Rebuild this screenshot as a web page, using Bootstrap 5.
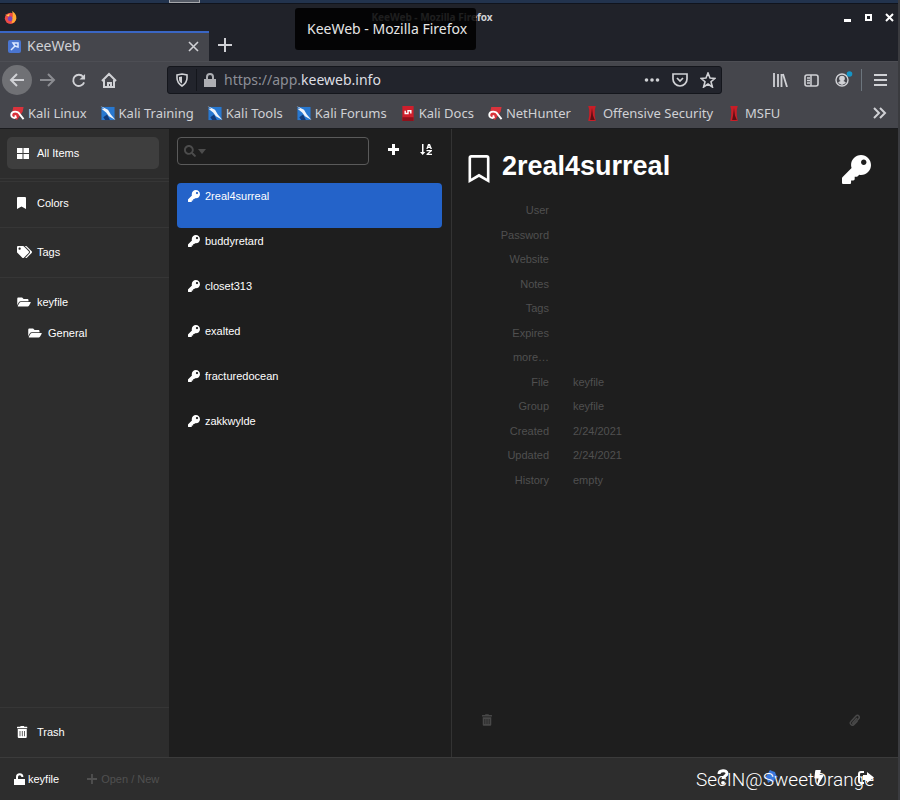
<!DOCTYPE html>
<html lang="en">
<head>
<meta charset="utf-8">
<meta name="viewport" content="width=device-width, initial-scale=1">
<title>KeeWeb</title>
<link href="https://cdn.jsdelivr.net/npm/bootstrap@5.3.0/dist/css/bootstrap.min.css" rel="stylesheet">
<style>
body{background:#1e1e1e;color:#fff;font:11px/16px "Liberation Sans",Arial,sans-serif}
.window{border-right:2px solid #3a3b3f}
.chrome{font:13px/18px "Noto Sans",sans-serif;color:#d0d1d5}
svg{fill:currentColor;flex:none;display:block}
.line-icon{fill:none;stroke:currentColor;stroke-width:2}
button,a{color:inherit;background:none;border:0;padding:0;text-decoration:none;text-align:left}
.desktop-strip{height:3px;background:#22334d;padding-left:169px}
.desktop-strip span{display:block;width:31px;height:3px;border:1px solid #a4a6aa;border-top:0;background:#555b66}
.titlebar{height:28px;background:#202229;border-top:1px solid #10141d;padding:0 4px}
.window-title{font-size:10px;font-weight:700;padding-left:4px;margin-bottom:2px}
.window-buttons{gap:12px;color:#fff}
.tip{position:absolute;left:295px;top:8px;z-index:5;background:rgba(0,0,0,.86);border-radius:3px;padding:12px 9px 12px 12px;font-size:14px;color:#e6e6e6}
.tabs{height:30px;background:#202229}
.tab{width:209px;background:#45464c;border-top:2px solid #3a66c4;padding:0 10px 2px 8px;gap:6px;font-size:14px}
.new-tab{padding:0 0 2px 9px}
.toolbar{height:37px;background:#45464c;padding:0 11px 0 2px;border-top:1px solid #4d4e54}
.nav-buttons{gap:15px}
.back{width:30px;height:30px;background:#707175;margin-right:-7px}
.address{height:28px;background:#22242c;border:1px solid #14161c;border-radius:3px;margin-left:50px;width:555px;padding:0 5px 0 7px}
.url{font-size:14px;color:#8c8e96}
.url b{font-weight:400;color:#dddee2}
.divider{width:1px;height:22px;background:#14161c;margin:0 7px}
.bookmarks{height:31px;background:#45464c;border-bottom:1px solid #1a1b1e;padding:0 11px 0 9px;gap:13px}
.bookmarks a{gap:3px;white-space:nowrap}
.side{width:169px;background:#2d2d2d}
.side-row{padding:0 17px 2px;gap:6px;height:50px}
.side-row.short{height:46px;padding-bottom:4px}
.icon-slot{width:14px}
.tight{margin-right:-1px}
.nested{height:12px;padding:0 17px 0 28px;gap:6px}
.selected-side{height:32px;margin:8px 10px 9px 7px;padding:0 10px;gap:8px;background:#3e3e3e;border-radius:5px}
.rule{border-top:1px solid #363636}
.gap-rule{height:3px}
.list{width:283px;border-right:1px solid #333;padding:8px 9px 0 8px}
.search{width:192px;height:28px;border:1px solid #5a5a5a;border-radius:4px;color:#4c4c4c;padding:0 6px;gap:2px}
.search input{min-width:0;background:none;border:0;outline:0;color:#fff}
.actions{gap:21px;margin:0 0 4px 19px}
.items{margin-top:18px}
.items button{height:45px;width:100%;padding:5px 11px;gap:5px;border-radius:4px}
.items svg{margin-top:2px}
.items .current{background:#2463c9}
.details{padding:0 27px 0 16px}
.details h1{font-size:27px;line-height:34px;font-weight:700;margin:0}
.heading{padding-top:20px;gap:12px}
.heading button{padding-top:6px}
.fields{margin:14px 0 0;display:grid;grid-template-columns:81px 1fr;grid-auto-rows:1fr;column-gap:24px;height:294px;color:#505050;align-items:center}
.fields dt{text-align:right;font-weight:400}
.fields dd{margin:0}
.detail-actions{color:#484848;padding:0 11px 31px 14px}
.bottom{height:43px;background:#2d2d2d;border-top:1px solid #3b3b3b;padding:0 24px 0 14px}
.open-file{gap:2px}
.muted-button{color:#505050}
.bottom-icons{gap:34px;margin-bottom:4px}
.watermark{position:absolute;right:24px;bottom:7px;font:300 19px/26px Roboto,sans-serif;z-index:4}
</style>
</head>
<body>
<svg width="0" height="0" class="position-absolute" aria-hidden="true"><defs>
<symbol id="key" viewBox="0 0 512 512"><path d="M512 176.001C512 273.203 433.202 352 336 352c-11.22 0-22.19-1.062-32.827-3.069l-24.012 27.014A23.999 23.999 0 0 1 261.223 384H224v40c0 13.255-10.745 24-24 24h-40v40c0 13.255-10.745 24-24 24H24c-13.255 0-24-10.745-24-24v-78.059c0-6.365 2.529-12.47 7.029-16.971l161.802-161.802C163.108 213.814 160 195.271 160 176 160 78.798 238.797.001 335.999 0 433.488-.001 512 78.511 512 176.001zM336 128c0 26.51 21.49 48 48 48s48-21.49 48-48-21.49-48-48-48-48 21.49-48 48z"/></symbol>
<symbol id="folder" viewBox="0 0 576 512"><path d="M572.694 292.093L500.27 416.248A63.997 63.997 0 0 1 444.989 448H45.025c-18.523 0-30.064-20.093-20.731-36.093l72.424-124.155A64 64 0 0 1 152 256h399.964c18.523 0 30.064 20.093 20.73 36.093zM152 224h328v-48c0-26.51-21.49-48-48-48H272l-64-64H48C21.49 64 0 85.49 0 112v278.046l69.077-118.418C86.214 242.25 117.989 224 152 224z"/></symbol>
<symbol id="trash" viewBox="0 0 448 512"><path fill-rule="evenodd" d="M32 464a48 48 0 0 0 48 48h288a48 48 0 0 0 48-48V128H32zM304 208h32v224h-32zM208 208h32v224h-32zM112 208h32v224h-32zM432 32H312l-16-32H152l-16 32H16L0 48v48h448V48z"/></symbol>
<symbol id="dragon" viewBox="0 0 16 16"><path fill="#2878d0" d="M1 1h14v14H1z"/><path fill="#123a78" d="M3 12l4-3 3 6H5z"/><path fill="#f0f4fa" d="M0 0l8 4 3 5 5 6-7-4-3-4-5-4 3 0z"/></symbol>
<symbol id="swirl" viewBox="0 0 16 16"><path fill="#d9333c" d="M4 1h11l-1 5-6 9-6-4z"/><path fill="none" stroke="#fff" stroke-width="2" d="M6 13C0 12 1 6 6 6c3 0 4 1 5 3l4 5M7 13l-1-3"/></symbol>
<symbol id="spike" viewBox="0 0 16 16"><path fill="#c81e27" d="M4 0h8l-1 4v6l1 6H4l1-6V4z"/><path fill="#5d0e13" d="M8 2l1 8 2 5H6l1-5z"/></symbol>
</defs></svg>

<div class="window vh-100 d-flex flex-column position-relative overflow-hidden">
<header class="chrome">
  <div class="desktop-strip"><span></span></div>
  <div class="titlebar d-flex align-items-center">
    <svg width="13" height="13" viewBox="0 0 16 16"><circle cx="8" cy="9" r="7" fill="#ee4b45"/><path fill="#ffac33" d="M10 0c3 2 6 5 5 10-1 3-4 5-6 5 3-4 0-5-1-6 4 0 3-4 2-9z"/><path fill="#ffd04a" d="M1 4l3 1 3-2-1 4z"/><circle cx="7.500" cy="9.500" r="3" fill="#7b45b8"/></svg>
    <span class="window-title flex-fill text-center">KeeWeb - Mozilla Firefox</span>
    <div class="window-buttons d-flex">
      <button aria-label="Minimize"><svg width="9" height="9" viewBox="0 0 9 9"><path d="M1 6h7v3H1z"/></svg></button>
      <button aria-label="Maximize"><svg width="9" height="9" viewBox="0 0 9 9" class="line-icon"><path d="M2 2h5v5H2z"/></svg></button>
      <button aria-label="Close window"><svg width="9" height="9" viewBox="0 0 9 9" class="line-icon"><path d="M1 1l7 7M8 1L1 8"/></svg></button>
    </div>
  </div>
  <div class="tip">KeeWeb - Mozilla Firefox</div>
  <div class="tabs d-flex">
    <div class="tab d-flex align-items-center">
      <svg width="13" height="13" viewBox="0 0 13 13"><rect width="13" height="13" rx="2" fill="#4a75d0"/><path stroke="#dce8ff" stroke-width="1.500" fill="none" d="M3 10l4-4M5 3h5v4L7 6z"/></svg>
      <span class="flex-fill">KeeWeb</span>
      <button aria-label="Close tab"><svg width="11" height="11" viewBox="0 0 11 11" class="line-icon"><path d="M1 1l9 9M10 1l-9 9" stroke-width="1.600"/></svg></button>
    </div>
    <button class="new-tab" aria-label="New tab"><svg width="14" height="14" viewBox="0 0 14 14" class="line-icon"><path d="M7 0v14M0 7h14"/></svg></button>
  </div>
  <nav class="toolbar d-flex align-items-center">
    <div class="nav-buttons d-flex align-items-center">
    <button class="back rounded-circle d-flex align-items-center justify-content-center" aria-label="Back"><svg width="16" height="14" viewBox="0 0 16 14" class="line-icon"><path d="M15 7H2M8 1L2 7l6 6"/></svg></button>
    <button class="opacity-50" aria-label="Forward"><svg width="16" height="14" viewBox="0 0 16 14" class="line-icon"><path d="M0 7h14M8 1l6 6-6 6"/></svg></button>
    <button aria-label="Reload"><svg width="15" height="15" viewBox="0 0 16 16" class="line-icon"><path d="M13 4a6 6 0 1 0 1 6"/><path d="M15 1v6H9z" fill="currentColor" stroke="none"/></svg></button>
    <button aria-label="Home"><svg width="16" height="16" viewBox="0 0 16 16" class="line-icon"><path d="M1 9l7-7 7 7M3 8v7h10V8M7 15v-4h3v4"/></svg></button>
    </div>
    <div class="address d-flex align-items-center">
      <svg width="14" height="14" viewBox="0 0 14 14" class="line-icon"><path stroke-width="1.600" d="M2 2l5-1 5 1v3c0 4-2 6-5 8-3-2-5-4-5-8z"/><path fill="currentColor" stroke="none" d="M7 3.500l-3 .6V6c0 2 1 3.500 3 4.500z"/></svg>
      <span class="divider"></span>
      <svg width="12" height="14" viewBox="0 0 12 14" opacity=".8"><path d="M0 6h12v8H0z"/><path class="line-icon" d="M3 7V4a3 3 0 0 1 6 0v3"/></svg>
      <span class="url flex-fill ms-2">https://app.<b>keeweb.info</b></span>
      <button aria-label="Page actions"><svg width="16" height="14" viewBox="0 0 16 14"><circle cx="2.500" cy="7" r="1.800"/><circle cx="8" cy="7" r="1.800"/><circle cx="13.500" cy="7" r="1.800"/></svg></button>
      <button class="ms-2 me-1 px-1" aria-label="Pocket"><svg width="16" height="14" viewBox="0 0 16 14" class="line-icon"><path stroke-width="1.700" d="M1 1h14v5a7 7 0 0 1-14 0zM5 5l3 3 3-3"/></svg></button>
      <button class="ms-1" aria-label="Bookmark page"><svg width="16" height="16" viewBox="0 0 16 16" class="line-icon"><path stroke-width="1.600" d="M8 1l2 5 5 .4-4 3.300L12.400 15 8 12l-4.400 3L5 9.700 1 6.400 6 6z"/></svg></button>
    </div>
    <div class="d-flex align-items-center ms-auto">
      <button aria-label="Library"><svg width="15" height="14" viewBox="0 0 15 14" class="line-icon"><path stroke-width="1.800" d="M1 0v14M5 1v13M8.500 1v13M10 1l4 13"/></svg></button>
      <button class="ms-3" aria-label="Sidebars"><svg width="15" height="13" viewBox="0 0 15 13" class="line-icon"><rect x="1" y="1" width="13" height="11" rx="2" stroke-width="1.600"/><path stroke-width="1.500" d="M7 1v11M3 4h3M3 6.500h3M3 9h3"/></svg></button>
      <button class="ms-3" aria-label="Account"><svg width="18" height="20" viewBox="0 0 18 20"><circle cx="7" cy="10" r="6" fill="none" stroke="currentColor" stroke-width="1.400"/><circle cx="7" cy="8.500" r="2.800"/><path d="M3 13c2-3 6-3 8 0l-4 2z"/><circle cx="14.500" cy="4" r="2.800" fill="#1595c6"/></svg></button>
      <span class="divider bg-secondary mx-2"></span>
      <button class="ms-1" aria-label="Menu"><svg width="13" height="12" viewBox="0 0 13 12"><path d="M0 0h13v2H0zM0 5h13v2H0zM0 10h13v2H0z"/></svg></button>
    </div>
  </nav>
  <nav class="bookmarks d-flex align-items-center">
    <a class="d-flex align-items-center" href="#"><svg width="16" height="15"><use href="#swirl"/></svg>Kali Linux</a>
    <a class="d-flex align-items-center" href="#"><svg width="16" height="15"><use href="#dragon"/></svg>Kali Training</a>
    <a class="d-flex align-items-center" href="#"><svg width="16" height="15"><use href="#dragon"/></svg>Kali Tools</a>
    <a class="d-flex align-items-center" href="#"><svg width="16" height="15"><use href="#dragon"/></svg>Kali Forums</a>
    <a class="d-flex align-items-center" href="#"><svg width="16" height="15" viewBox="0 0 16 16"><path fill="#cf1f2c" d="M2 0h12v16H2z"/><path fill="#8e111b" d="M2 12h12v4H2z"/><path fill="none" stroke="#fff" stroke-width="1.500" d="M5 5v3h3V5h3v3"/></svg>Kali Docs</a>
    <a class="d-flex align-items-center" href="#"><svg width="16" height="15"><use href="#swirl"/></svg>NetHunter</a>
    <a class="d-flex align-items-center" href="#"><svg width="16" height="15"><use href="#spike"/></svg>Offensive Security</a>
    <a class="d-flex align-items-center" href="#"><svg width="16" height="15"><use href="#spike"/></svg>MSFU</a>
    <button class="ms-auto" aria-label="More bookmarks"><svg width="14" height="12" viewBox="0 0 14 12" class="line-icon"><path d="M1 1l5 5-5 5M7 1l5 5-5 5"/></svg></button>
  </nav>
</header>

<main class="d-flex flex-fill">
  <nav class="side d-flex flex-column flex-shrink-0">
    <button class="selected-side d-flex align-items-center"><svg width="12" height="11" viewBox="0 0 12 11"><path d="M0 0h5.500v5H0zM6.500 0H12v5H6.500zM0 6h5.500v5H0zM6.500 6H12v5H6.500z"/></svg>All Items</button>
    <div class="rule gap-rule"></div>
    <button class="side-row short rule d-flex align-items-center"><svg class="icon-slot" height="12" viewBox="0 0 384 512" preserveAspectRatio="xMinYMid"><path d="M0 512V48C0 21.490 21.490 0 48 0h288c26.510 0 48 21.490 48 48v464L192 400 0 512z"/></svg>Colors</button>
    <button class="side-row rule d-flex align-items-center"><svg width="15" height="12" viewBox="0 0 640 512" class="tight"><path d="M497.941 225.941L286.059 14.059A48 48 0 0 0 252.118 0H48C21.490 0 0 21.490 0 48v204.118a48 48 0 0 0 14.059 33.941l211.882 211.882c18.744 18.745 49.136 18.746 67.882 0l204.118-204.118c18.745-18.745 18.745-49.137 0-67.882zM112 160c-26.510 0-48-21.490-48-48s21.490-48 48-48 48 21.490 48 48-21.490 48-48 48zm513.941 133.823L421.823 497.941c-18.745 18.745-49.137 18.745-67.882 0l-.36-.36L527.640 323.522c16.999-16.999 26.360-39.600 26.360-63.640s-9.362-46.641-26.360-63.640L331.397 0h48.721a48 48 0 0 1 33.941 14.059l211.882 211.882c18.745 18.745 18.745 49.137 0 67.882z"/></svg>Tags</button>
    <button class="side-row rule d-flex align-items-center"><svg class="icon-slot" height="12"><use href="#folder"/></svg>keyfile</button>
    <button class="nested d-flex align-items-center"><svg class="icon-slot" height="12"><use href="#folder"/></svg>General</button>
    <button class="side-row rule d-flex align-items-center mt-auto"><svg class="icon-slot" height="12" viewBox="0 0 448 512" preserveAspectRatio="xMinYMid"><use href="#trash" width="448" height="512"/></svg>Trash</button>
  </nav>
  <section class="list flex-shrink-0">
    <div class="d-flex align-items-center">
      <label class="search d-flex align-items-center"><svg width="12" height="12" viewBox="0 0 512 512"><path d="M505 442.700L405.300 343c-4.500-4.500-10.600-7-17-7H372c27.600-35.300 44-79.700 44-128C416 93.100 322.900 0 208 0S0 93.100 0 208s93.100 208 208 208c48.300 0 92.700-16.400 128-44v16.300c0 6.400 2.500 12.500 7 17l99.700 99.700c9.400 9.400 24.600 9.400 33.900 0l28.300-28.300c9.400-9.400 9.400-24.600.1-34zM208 336c-70.700 0-128-57.200-128-128 0-70.700 57.200-128 128-128 70.700 0 128 57.200 128 128 0 70.700-57.200 128-128 128z"/></svg><svg width="8" height="5" viewBox="0 0 8 5"><path d="M0 0h8L4 5z"/></svg><input class="flex-fill" type="text" aria-label="Search"></label>
      <div class="actions d-flex align-items-center">
        <button aria-label="Add entry"><svg width="11" height="11" viewBox="0 0 11 11"><path d="M4 0h3v4h4v3H7v4H4V7H0V4h4z"/></svg></button>
        <button aria-label="Sort"><svg width="12" height="11" viewBox="0 0 12 11"><path d="M2 0h1.500v8H5.300L2.700 11 0 8h2zM8 0h2l2 5h-1.600l-.3-1H8l-.4 1H6.300zM9 1.500L8.600 3h.8zM6.500 6H12v1L8.700 9.800H12V11H6.500v-1L9.800 7.200H6.500z"/></svg></button>
      </div>
    </div>
    <div class="items">
      <button class="current d-flex"><svg width="12" height="12"><use href="#key"/></svg><span>2real4surreal</span></button>
      <button class="d-flex"><svg width="12" height="12"><use href="#key"/></svg><span>buddyretard</span></button>
      <button class="d-flex"><svg width="12" height="12"><use href="#key"/></svg><span>closet313</span></button>
      <button class="d-flex"><svg width="12" height="12"><use href="#key"/></svg><span>exalted</span></button>
      <button class="d-flex"><svg width="12" height="12"><use href="#key"/></svg><span>fracturedocean</span></button>
      <button class="d-flex"><svg width="12" height="12"><use href="#key"/></svg><span>zakkwylde</span></button>
    </div>
  </section>
  <section class="details flex-fill d-flex flex-column">
    <div class="heading d-flex align-items-start">
      <button aria-label="Entry color"><svg width="22" height="28" viewBox="0 0 384 512"><path d="M336 0H48C21.490 0 0 21.490 0 48v464l192-112 192 112V48c0-26.510-21.490-48-48-48zm0 428.430l-144-84-144 84V54a6 6 0 0 1 6-6h276c3.314 0 6 2.683 6 5.996V428.430z"/></svg></button>
      <h1 class="flex-fill">2real4surreal</h1>
      <button aria-label="Entry icon"><svg width="29" height="29"><use href="#key"/></svg></button>
    </div>
    <dl class="fields">
      <dt>User</dt><dd></dd><dt>Password</dt><dd></dd><dt>Website</dt><dd></dd><dt>Notes</dt><dd></dd><dt>Tags</dt><dd></dd><dt>Expires</dt><dd></dd><dt>more…</dt><dd></dd>
      <dt>File</dt><dd>keyfile</dd><dt>Group</dt><dd>keyfile</dd><dt>Created</dt><dd>2/24/2021</dd><dt>Updated</dt><dd>2/24/2021</dd><dt>History</dt><dd>empty</dd>
    </dl>
    <div class="detail-actions d-flex justify-content-between mt-auto">
      <button aria-label="Delete"><svg width="10" height="12"><use href="#trash"/></svg></button>
      <button aria-label="Attach file"><svg width="11" height="12" viewBox="0 0 11 12" class="line-icon"><path stroke-width="1.500" d="M8 4L4 8.500c-1 1 .5 2 1.300 1L9.500 5c2-2-.5-5-2.500-3L2 7.500c-2 2 1 5 3 3L8.500 7"/></svg></button>
    </div>
  </section>
</main>

<footer class="bottom d-flex align-items-center">
  <button class="open-file d-flex align-items-center"><svg width="12" height="12" viewBox="0 0 12 12"><path d="M0 6h11v6H0z"/><path class="line-icon" d="M3 7V4a2.700 2.700 0 0 1 5.400 0"/></svg>keyfile</button>
  <button class="muted-button d-flex align-items-center ms-4 ps-1 gap-1"><svg width="10" height="10" viewBox="0 0 11 11"><path d="M4.500 0h2v4.500H11v2H6.500V11h-2V6.500H0v-2h4.500z"/></svg>Open / New</button>
  <div class="bottom-icons d-flex align-items-center ms-auto">
    <button aria-label="Help"><svg width="12" height="16" viewBox="0 0 12 16"><path fill="none" stroke="currentColor" stroke-width="3" d="M2 5c0-4 8-4.500 8-.5C10 7 6 7 6 10"/><circle cx="6" cy="13.800" r="1.900"/></svg></button>
    <button aria-label="Settings"><svg width="17" height="14" viewBox="0 0 17 14"><path fill="#3978dc" d="M7 0l2 1 3 1 1 3 2 2-3 1-1 4-3-1-3 2-1-4-3-1 3-3z"/></svg></button>
    <button aria-label="Generate"><svg width="10" height="15" viewBox="0 0 320 512"><path d="M296 160H180.600l42.600-129.800C227.200 15 215.700 0 200 0H56C44 0 33.800 8.900 32.200 20.800l-32 240C-1.700 275.200 9.500 288 24 288h118.700L96.600 482.500c-3.600 15.200 8 29.500 23.300 29.500 8.400 0 16.400-4.400 20.800-12l176-304c9.300-15.900-2.200-36-20.700-36z"/></svg></button>
    <button aria-label="Lock"><svg width="16" height="13" viewBox="0 0 16 13"><path fill="none" stroke="currentColor" stroke-width="2" d="M6 1H3a2 2 0 0 0-2 2v7a2 2 0 0 0 2 2h3"/><path d="M9 1l7 5.500L9 12V9H5V4h4z"/></svg></button>
  </div>
</footer>
<div class="watermark">SecIN@SweetOrange</div>
</div>
<script src="https://cdn.jsdelivr.net/npm/bootstrap@5.3.0/dist/js/bootstrap.bundle.min.js"></script>
</body>
</html>
